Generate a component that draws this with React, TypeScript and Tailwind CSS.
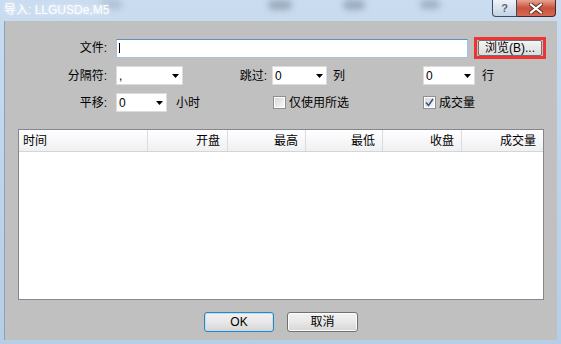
import React from 'react';

const font = "font-['Liberation_Sans','Noto_Sans_CJK_SC',sans-serif]";

function Combo({ value, w }: { value: string; w: string }) {
  return (
    <div className={`${w} h-[19px] bg-white border border-[#dcdcdc] flex items-center pl-[2px] pr-[3px]`}>
      <span className="flex-1 text-[12px] leading-none text-black">{value}</span>
      <svg width="7" height="4" viewBox="0 0 7 4">
        <polygon points="0,0 7,0 3.5,4" fill="#000" />
      </svg>
    </div>
  );
}

function Check({ checked }: { checked?: boolean }) {
  return (
    <div className="w-[13px] h-[13px] border border-[#8e8f8f] bg-white p-[1px]">
      <div className="w-full h-full bg-gradient-to-br from-[#d8d8d8] to-[#f8f8f8] flex items-center justify-center">
        {checked && (
          <svg width="9" height="9" viewBox="0 0 9 9">
            <path d="M1 4.5 L3.5 7.5 L8 1" stroke="#3f5281" strokeWidth="1.6" fill="none" />
          </svg>
        )}
      </div>
    </div>
  );
}

function Btn({ label, w, def }: { label: string; w: string; def?: boolean }) {
  return (
    <div
      className={`${w} h-[20px] rounded-[3px] border ${
        def ? 'border-[#3c7fb1] shadow-[inset_0_0_0_1px_#aee3fa]' : 'border-[#707070] shadow-[inset_0_0_0_1px_#fcfcfc]'
      } bg-gradient-to-b from-[#f2f2f2] via-[#e8e8e8] to-[#d6d6d6] flex items-center justify-center text-[12px] text-black`}
    >
      {label}
    </div>
  );
}

const cols = [
  { label: '时间', w: 'w-[129px]', left: true },
  { label: '开盘', w: 'w-[80px]' },
  { label: '最高', w: 'w-[78px]' },
  { label: '最低', w: 'w-[77px]' },
  { label: '收盘', w: 'w-[79px]' },
  { label: '成交量', w: 'w-[81px]' },
];

export default function App() {
  return (
    <div className={`w-[561px] h-[344px] bg-gradient-to-b from-[#c9dcf0] to-[#b6cde6] flex flex-col ${font} overflow-hidden`}>
      {/* title bar */}
      <div className="h-[21px] relative flex items-start">
        <div className="absolute left-[100px] top-0 w-[22px] h-[9px] rounded-full bg-[#8898aa]/40 blur-[3px]" />
        <div className="absolute left-[268px] top-0 w-[24px] h-[10px] rounded-full bg-[#6f7c8c]/50 blur-[3px]" />
        <div className="absolute left-[343px] top-0 w-[22px] h-[10px] rounded-full bg-[#6f7c8c]/50 blur-[3px]" />
        <div className="absolute left-[420px] top-0 w-[20px] h-[9px] rounded-full bg-[#6f7c8c]/45 blur-[3px]" />
        <span className="relative ml-[4px] mt-[4px] text-[12px] leading-none text-white [text-shadow:0_0_4px_rgba(255,255,255,0.9)]">
          导入: LLGUSDe,M5
        </span>
        <div className="flex-1" />
        <div className="relative flex mr-[5px]">
          <div className="w-[25px] h-[17px] border border-[#3b4a5e] border-t-0 rounded-bl-[4px] bg-gradient-to-b from-[#eef3f9] to-[#c3d3e6] flex items-center justify-center text-[11px] font-bold text-[#5a6878] leading-none">
            ?
          </div>
          <div className="w-[39px] h-[17px] border border-[#4d2520] border-t-0 border-l-0 rounded-br-[4px] bg-gradient-to-b from-[#e4a291] via-[#c9503d] to-[#d66a52] flex items-center justify-center">
            <svg width="14" height="11" viewBox="0 0 14 11">
              <path d="M2 1.5 L12 9.5 M12 1.5 L2 9.5" stroke="#5a2a22" strokeWidth="4" strokeLinecap="square" />
              <path d="M2 1.5 L12 9.5 M12 1.5 L2 9.5" stroke="#ffffff" strokeWidth="2.2" strokeLinecap="square" />
            </svg>
          </div>
        </div>
      </div>

      {/* client area */}
      <div className="flex-1 ml-[4px] mr-[4px] mb-[4px] bg-[#c0c0c0] flex flex-col pt-[16px] text-[12px] text-black border-l border-[#8aa0bb]">
        {/* row 1 */}
        <div className="flex items-center h-[22px]">
          <div className="w-[102px] text-right">文件:</div>
          <div className="ml-[9px] w-[352px] h-[19px] bg-white border border-[#a4c3e2] border-t-[#5f8fc0] flex items-center pl-[2px]">
            <div className="w-[1px] h-[10px] bg-black" />
          </div>
          <div className="ml-[6px] w-[72px] h-[22px] border-[3px] border-[#ec3434] px-[1px] py-0">
            <div className="w-full h-full rounded-[2px] border border-[#707070] bg-gradient-to-b from-[#f4f4f4] to-[#dcdcdc] flex items-center justify-center text-[12px] leading-none">
              浏览(B)...
            </div>
          </div>
        </div>

        {/* row 2 */}
        <div className="flex items-center h-[19px] mt-[7px]">
          <div className="w-[102px] text-right">分隔符:</div>
          <div className="ml-[9px]">
            <Combo value="," w="w-[67px]" />
          </div>
          <div className="w-[84px] text-right">跳过:</div>
          <div className="ml-[5px]">
            <Combo value="0" w="w-[55px]" />
          </div>
          <div className="w-[96px] pl-[6px]">列</div>
          <Combo value="0" w="w-[52px]" />
          <div className="ml-[7px]">行</div>
        </div>

        {/* row 3 */}
        <div className="flex items-center h-[19px] mt-[8px]">
          <div className="w-[102px] text-right">平移:</div>
          <div className="ml-[9px]">
            <Combo value="0" w="w-[51px]" />
          </div>
          <div className="w-[106px] pl-[9px]">小时</div>
          <div className="w-[150px] flex items-center gap-[3px]">
            <Check />
            <span>仅使用所选</span>
          </div>
          <div className="flex items-center gap-[3px]">
            <Check checked />
            <span>成交量</span>
          </div>
        </div>

        {/* table */}
        <div className="mt-[17px] ml-[13px] w-[526px] h-[171px] border border-[#828790] bg-white">
          <div className="flex h-[22px] bg-gradient-to-b from-white to-[#eff0f2] border-b border-[#d5d5d5]">
            {cols.map((c, i) => (
              <div
                key={c.label}
                className={`${c.w} flex items-center ${c.left ? 'justify-start pl-[4px]' : 'justify-end pr-[7px]'} ${
                  i < cols.length - 1 ? 'border-r border-[#dcdcdc]' : ''
                }`}
              >
                {c.label}
              </div>
            ))}
          </div>
        </div>

        {/* buttons */}
        <div className="mt-[12px] flex justify-center gap-[13px]">
          <Btn label="OK" w="w-[70px]" def />
          <Btn label="取消" w="w-[71px]" />
        </div>
      </div>
    </div>
  );
}
